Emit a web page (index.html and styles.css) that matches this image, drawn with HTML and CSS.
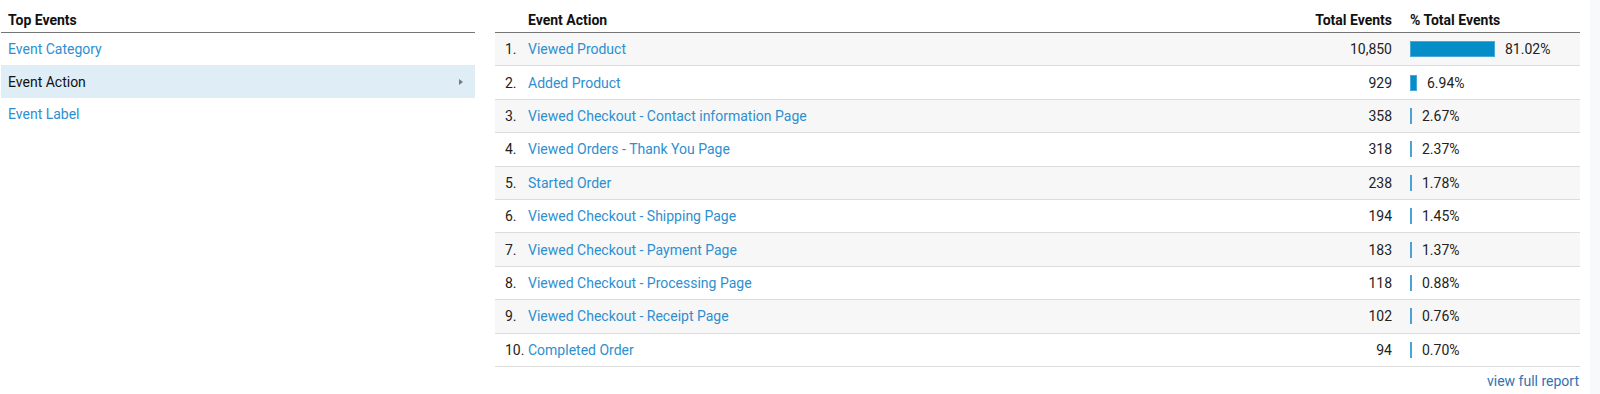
FILE: index.html
```html
<!DOCTYPE html>
<html>
<head>
<meta charset="utf-8">
<link rel="stylesheet" href="styles.css">
</head>
<body>
<div class="page">
  <div class="left">
    <div class="left-head">Top Events</div>
    <div class="left-item"><a class="link">Event Category</a></div>
    <div class="left-item active"><span>Event Action</span><span class="arrow"></span></div>
    <div class="left-item"><a class="link">Event Label</a></div>
  </div>
  <div class="right">
    <div class="row head">
      <div class="c-num"></div>
      <div class="c-name">Event Action</div>
      <div class="c-total">Total Events</div>
      <div class="c-pct">% Total Events</div>
    </div>
    <div class="row odd"><div class="c-num">1.</div><div class="c-name"><a class="link">Viewed Product</a></div><div class="c-total">10,850</div><div class="c-pct"><span class="bar" style="width:85px"></span><span>81.02%</span></div></div>
    <div class="row"><div class="c-num">2.</div><div class="c-name"><a class="link">Added Product</a></div><div class="c-total">929</div><div class="c-pct"><span class="bar" style="width:7px"></span><span>6.94%</span></div></div>
    <div class="row odd"><div class="c-num">3.</div><div class="c-name"><a class="link">Viewed Checkout - Contact information Page</a></div><div class="c-total">358</div><div class="c-pct"><span class="bar thin"></span><span>2.67%</span></div></div>
    <div class="row"><div class="c-num">4.</div><div class="c-name"><a class="link">Viewed Orders - Thank You Page</a></div><div class="c-total">318</div><div class="c-pct"><span class="bar thin"></span><span>2.37%</span></div></div>
    <div class="row odd"><div class="c-num">5.</div><div class="c-name"><a class="link">Started Order</a></div><div class="c-total">238</div><div class="c-pct"><span class="bar thin"></span><span>1.78%</span></div></div>
    <div class="row"><div class="c-num">6.</div><div class="c-name"><a class="link">Viewed Checkout - Shipping Page</a></div><div class="c-total">194</div><div class="c-pct"><span class="bar thin"></span><span>1.45%</span></div></div>
    <div class="row odd"><div class="c-num">7.</div><div class="c-name"><a class="link">Viewed Checkout - Payment Page</a></div><div class="c-total">183</div><div class="c-pct"><span class="bar thin"></span><span>1.37%</span></div></div>
    <div class="row"><div class="c-num">8.</div><div class="c-name"><a class="link">Viewed Checkout - Processing Page</a></div><div class="c-total">118</div><div class="c-pct"><span class="bar thin"></span><span>0.88%</span></div></div>
    <div class="row odd"><div class="c-num">9.</div><div class="c-name"><a class="link">Viewed Checkout - Receipt Page</a></div><div class="c-total">102</div><div class="c-pct"><span class="bar thin"></span><span>0.76%</span></div></div>
    <div class="row"><div class="c-num">10.</div><div class="c-name"><a class="link">Completed Order</a></div><div class="c-total">94</div><div class="c-pct"><span class="bar thin"></span><span>0.70%</span></div></div>
    <div class="footer"><a class="full">view full report</a></div>
  </div>
  <div class="strip"></div>
</div>
</body>
</html>
```
FILE: styles.css
```css
html, body {
  margin: 0;
  padding: 0;
  background: #fff;
}
body {
  font-family: Roboto, "Liberation Sans", sans-serif;
  font-size: 14px;
  color: #222;
  width: 1600px;
  height: 394px;
  overflow: hidden;
}
.page {
  display: flex;
  height: 394px;
}
.left {
  width: 474px;
  margin-left: 1px;
}
.left-head {
  height: 33px;
  box-sizing: border-box;
  border-bottom: 1px solid #757575;
  padding: 12px 0 0 7px;
  font-weight: bold;
  color: #111;
}
.left-item {
  height: 32.4px;
  display: flex;
  align-items: center;
  justify-content: space-between;
  padding: 0 12px 0 7px;
}
.left-item.active {
  background: #deedf6;
  color: #111;
}
.arrow {
  width: 0;
  height: 0;
  border-top: 3.5px solid transparent;
  border-bottom: 3.5px solid transparent;
  border-left: 4px solid #7a7a7a;
}
.link {
  color: #2e8fd0;
  text-decoration: none;
}
.right {
  margin-left: 20px;
  width: 1085px;
}
.row {
  display: flex;
  align-items: center;
  height: 33.4px;
  box-sizing: border-box;
  border-bottom: 1px solid #dcdcdc;
}
.row.odd {
  background: #f7f7f7;
}
.row.head {
  height: 33px;
  border-bottom: 1px solid #757575;
  font-weight: bold;
  color: #111;
  align-items: flex-start;
  padding-top: 12px;
  background: #fff;
}
.c-num {
  width: 23px;
  padding-left: 10px;
}
.c-name {
  flex: 1;
}
.c-total {
  width: 200px;
  text-align: right;
}
.c-pct {
  width: 188px;
  box-sizing: border-box;
  padding-left: 18px;
  display: flex;
  align-items: center;
}
.bar {
  display: inline-block;
  height: 16px;
  background: #058dc7;
  box-sizing: border-box;
  border: 1px solid #4aa8d8;
  margin-right: 10px;
}
.bar.thin {
  width: 2px;
  height: 16px;
  border: none;
  background: #4aa3d8;
}
.footer {
  text-align: right;
  padding-top: 6px;
  padding-right: 1px;
}
.full {
  color: #3272b4;
  text-decoration: none;
}
.strip {
  margin-left: 10px;
  flex: 1;
  background: #f8f9fa;
}
```
